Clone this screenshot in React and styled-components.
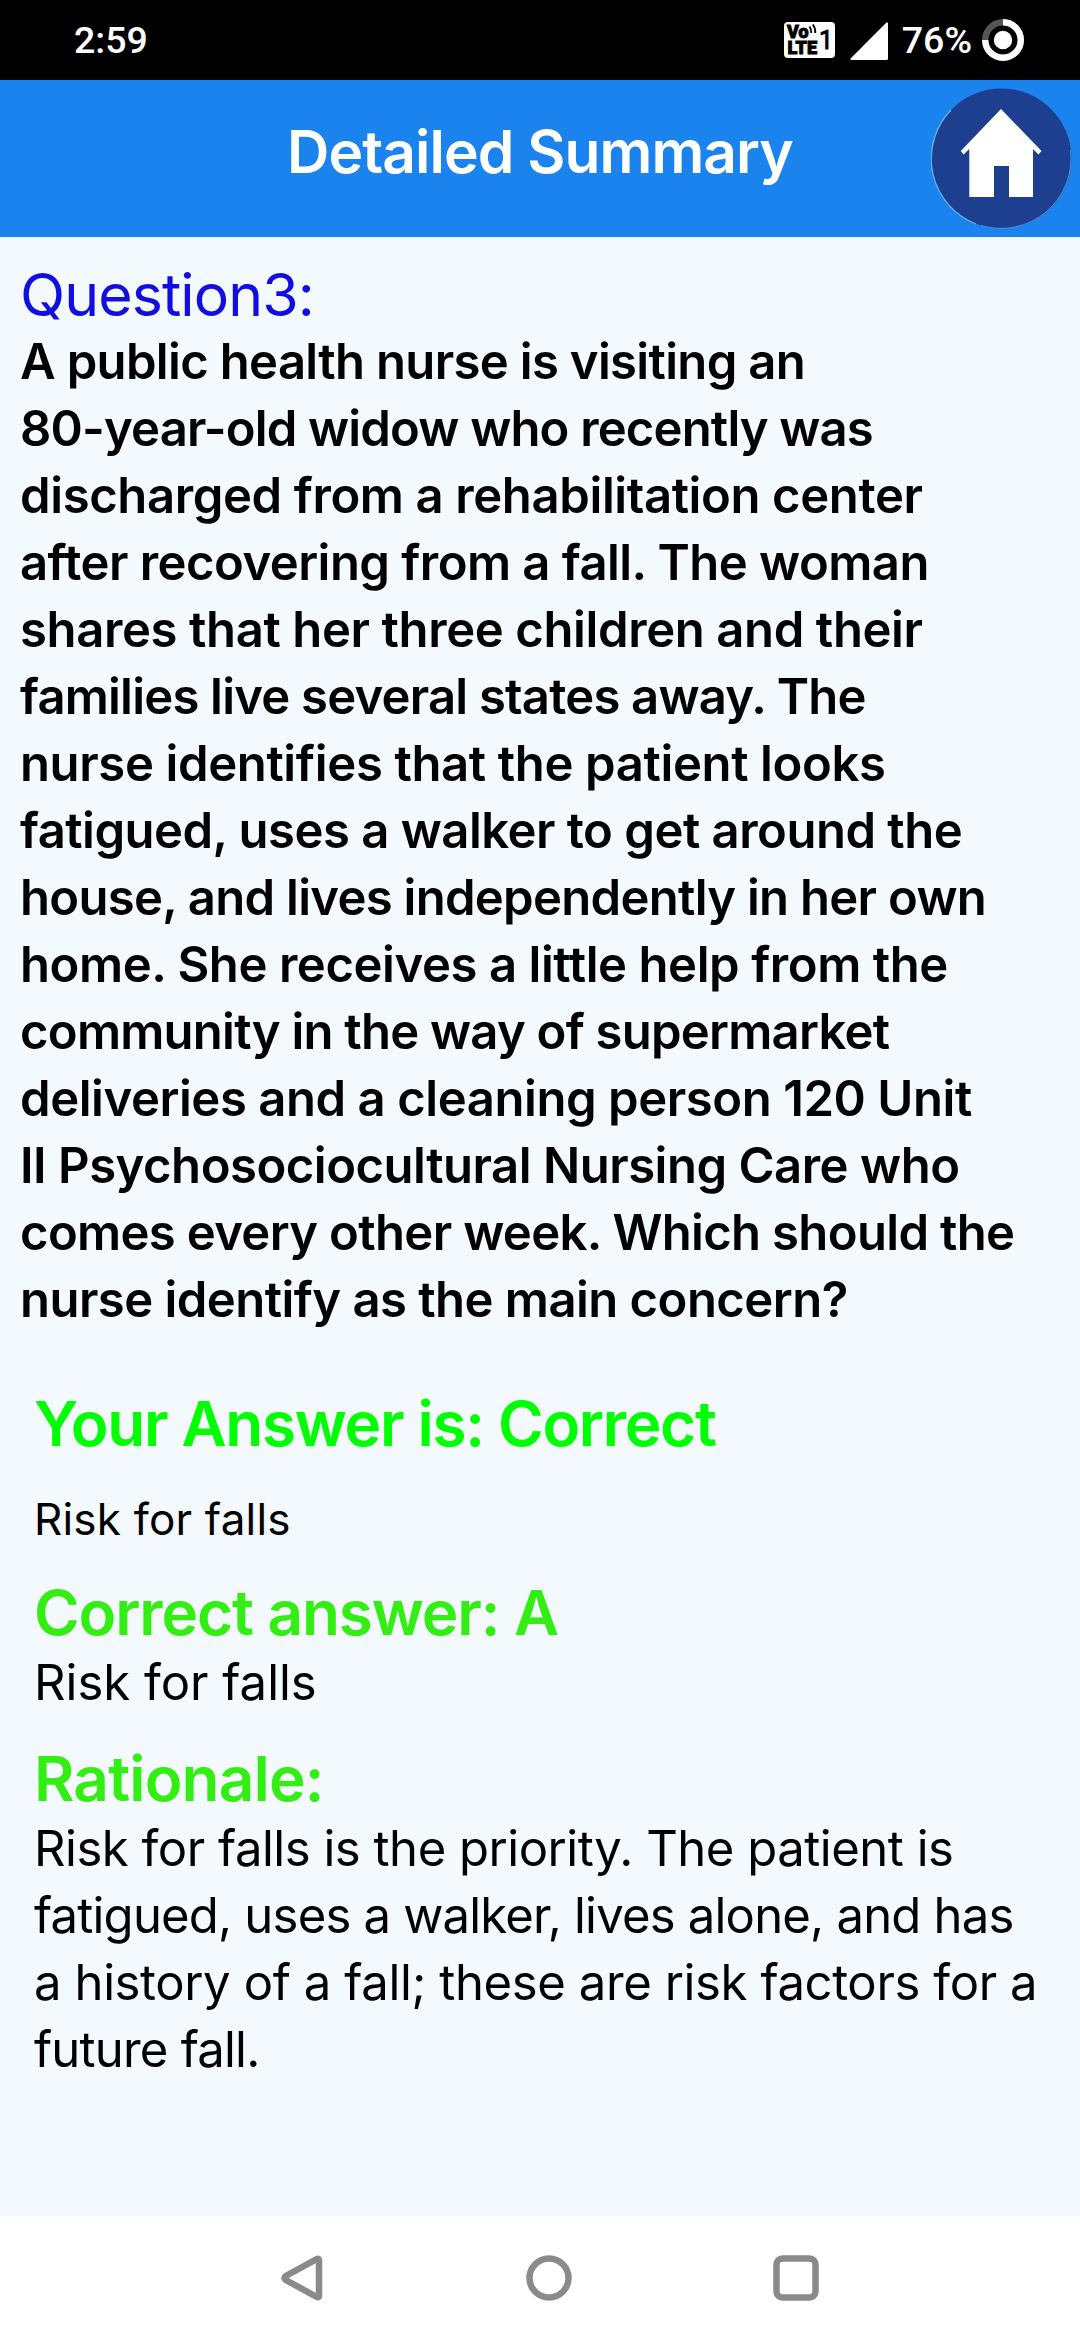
import React from 'react';
import styled, { createGlobalStyle } from 'styled-components';

const question = [
	['A public health nurse is visiting an', -0.66],
	['80-year-old widow who recently was', -0.83],
	['discharged from a rehabilitation center', -0.38],
	['after recovering from a fall. The woman', -0.53],
	['shares that her three children and their', -0.38],
	['families live several states away. The', -0.78],
	['nurse identifies that the patient looks', -0.36],
	['fatigued, uses a walker to get around the', -0.5],
	['house, and lives independently in her own', -0.7],
	['home. She receives a little help from the', -0.42],
	['community in the way of supermarket', -0.75],
	['deliveries and a cleaning person 120 Unit', -0.43],
	['II Psychosociocultural Nursing Care who', -0.48],
	['comes every other week. Which should the', -0.66],
	['nurse identify as the main concern?', -0.53],
];

const rationale = [
	['Risk for falls is the priority. The patient is', -0.47],
	['fatigued, uses a walker, lives alone, and has', -0.79],
	['a history of a fall; these are risk factors for a', -0.38],
	['future fall.', -0.78],
];

function StatusBar() {
	return (
		<StatusWrapper>
			<StatusText>2:59</StatusText>
			<StatusIcons>
				<svg width='51' height='36' viewBox='0 0 51 36'>
					<rect width='51' height='36' rx='4' fill='#fff' />
					<g fill='#000' stroke='#000' strokeWidth='0.9' fontFamily='Roboto, sans-serif'>
						<text x='3' y='15.8' fontSize='17.5' fontWeight='900' textLength='21.5' lengthAdjust='spacingAndGlyphs'>
							Vo
						</text>
						<text x='3.5' y='31.8' fontSize='17.5' fontWeight='900' textLength='29.5' lengthAdjust='spacingAndGlyphs'>
							LTE
						</text>
						<text x='35' y='27' fontSize='25' fontWeight='400'>
							1
						</text>
					</g>
					<path d='M25.5 4.5q2 3 1.8 6.5M28.8 2.5q3 4 2.4 8.5' stroke='#000' strokeWidth='1.8' fill='none' />
				</svg>
				<Signal width='38' height='38' viewBox='0 0 38 38'>
					<path d='M36.5 0.5Q38 0 38 1.5V36.5Q38 38 36.5 38H1.5Q0 38 0.8 36.2Z' fill='#fff' />
				</Signal>
				<StatusText>76%</StatusText>
				<Battery width='42' height='42' viewBox='0 0 42 42'>
					<circle cx='21' cy='21' r='17.8' fill='none' stroke='#555' strokeWidth='6.4' />
					<path d='M21 3.2A17.8 17.8 0 1 1 3.2 21' fill='none' stroke='#fff' strokeWidth='6.4' />
					<circle cx='21' cy='21' r='9.2' fill='#fff' />
				</Battery>
			</StatusIcons>
		</StatusWrapper>
	);
}

function Header() {
	return (
		<HeaderWrapper>
			<Title>Detailed Summary</Title>
			<HomeButton aria-label='home'>
				<svg width='141' height='141' viewBox='0 0 141 141'>
					<circle cx='70.5' cy='70.5' r='70' fill='#1e3f8f' />
					<path d='M45 136A70 70 0 0 1 20 22' fill='none' stroke='#6db4d8' strokeWidth='1.2' />
					<path d='M50 137.5A70 70 0 0 0 139.5 62' fill='none' stroke='#4f93d6' strokeWidth='1' />
					<path
						d='M70 21L110.5 63L107.5 66.5L102 61V109H78V78H63V109H38.3V61L32.5 66.5L29.8 63Z'
						fill='#fff'
					/>
				</svg>
			</HomeButton>
		</HeaderWrapper>
	);
}

function NavBar() {
	return (
		<NavWrapper>
			<svg width='46' height='46' viewBox='0 0 46 46'>
				<path d='M40 4.8V41.2Q39.6 43 37.8 42L6.8 25Q4 23 6.8 21L37.8 4Q39.6 3 40 4.8Z' />
			</svg>
			<svg width='46' height='46' viewBox='0 0 46 46'>
				<circle cx='23' cy='23' r='19.5' />
			</svg>
			<svg width='46' height='46' viewBox='0 0 46 46'>
				<rect x='3.5' y='3.5' width='39' height='39' rx='6' />
			</svg>
		</NavWrapper>
	);
}

export default function App() {
	return (
		<Screen>
			<GlobalStyle />
			<StatusBar />
			<Header />
			<Content>
				<QuestionLabel>Question3:</QuestionLabel>
				<Text $weight={600}>
					{question.map(([line, track]) => (
						<Line key={line} $track={track}>
							{line}{' '}
						</Line>
					))}
				</Text>
				<Answers>
					<Heading $color='#00ff00' $track={-1.3}>
						Your Answer is: Correct
					</Heading>
					<Choice>Risk for falls</Choice>
					<Heading $track={-1.1}>Correct answer: A</Heading>
					<Text>Risk for falls</Text>
					<Heading $track={-0.8}>Rationale:</Heading>
					<Text>
						{rationale.map(([line, track]) => (
							<Line key={line} $track={track}>
								{line}{' '}
							</Line>
						))}
					</Text>
				</Answers>
			</Content>
			<NavBar />
		</Screen>
	);
}

const GlobalStyle = createGlobalStyle`
	body {
		margin: 0;
		background: #f4f9fe;
	}
`;

const Screen = styled.div`
	display: flex;
	flex-direction: column;
	width: 1080px;
	height: 2340px;
	overflow: hidden;
	background: #f4f9fe;
	font-family: Inter, 'Liberation Sans', sans-serif;
	color: #000;
`;

const StatusWrapper = styled.div`
	display: flex;
	align-items: center;
	justify-content: space-between;
	box-sizing: border-box;
	height: 80px;
	padding: 0 56px 0 74px;
	background: #000;
`;

const StatusIcons = styled.div`
	display: flex;
	align-items: center;
`;

const StatusText = styled.span`
	font: 500 37.5px/44px Roboto, sans-serif;
	color: #fff;
`;

const Signal = styled.svg`
	margin: 2px 14px 0 15px;
`;

const Battery = styled.svg`
	margin-left: 10px;
`;

const HeaderWrapper = styled.header`
	display: grid;
	grid-template-columns: 149px 1fr 149px;
	align-items: start;
	height: 157px;
	background: #1a83ed;
`;

const Title = styled.h1`
	grid-column: 2;
	margin: 37px 0 0;
	font-size: 58.7px;
	font-weight: 600;
	line-height: 70px;
	letter-spacing: -0.93px;
	text-align: center;
	white-space: nowrap;
	color: #fff;
`;

const HomeButton = styled.button`
	width: 141px;
	height: 141px;
	margin: 8px 0 0;
	padding: 0;
	border: none;
	background: none;
	svg {
		display: block;
	}
`;

const Content = styled.main`
	flex: 1;
	padding: 25px 20px 0;
`;

const QuestionLabel = styled.h2`
	margin: 0 0 1px;
	font-size: 59px;
	font-weight: 400;
	line-height: 65px;
	letter-spacing: -0.9px;
	color: #120ee0;
`;

const Text = styled.p`
	margin: 0;
	font-size: 49px;
	font-weight: ${({ $weight }) => $weight || 400};
	line-height: 67px;
`;

const Line = styled.span`
	display: block;
	white-space: nowrap;
	letter-spacing: ${({ $track }) => $track}px;
`;

const Answers = styled.section`
	padding: 55px 0 0 14px;
`;

const Heading = styled.h3`
	margin: 0;
	font-size: 62px;
	font-weight: 600;
	line-height: 72px;
	letter-spacing: ${({ $track }) => $track}px;
	color: ${({ $color }) => $color || '#32ee12'};
	* + & {
		margin-top: 27px;
	}
`;

const Choice = styled.p`
	margin: 29px 0 28px;
	font-size: 44px;
	line-height: 60px;
	letter-spacing: 0.2px;
`;

const NavWrapper = styled.nav`
	display: flex;
	align-items: center;
	justify-content: center;
	gap: 201px;
	height: 124px;
	padding-left: 18px;
	background: #fff;
	svg {
		fill: none;
		stroke: #8a8a8a;
		stroke-width: 6.5;
	}
`;
